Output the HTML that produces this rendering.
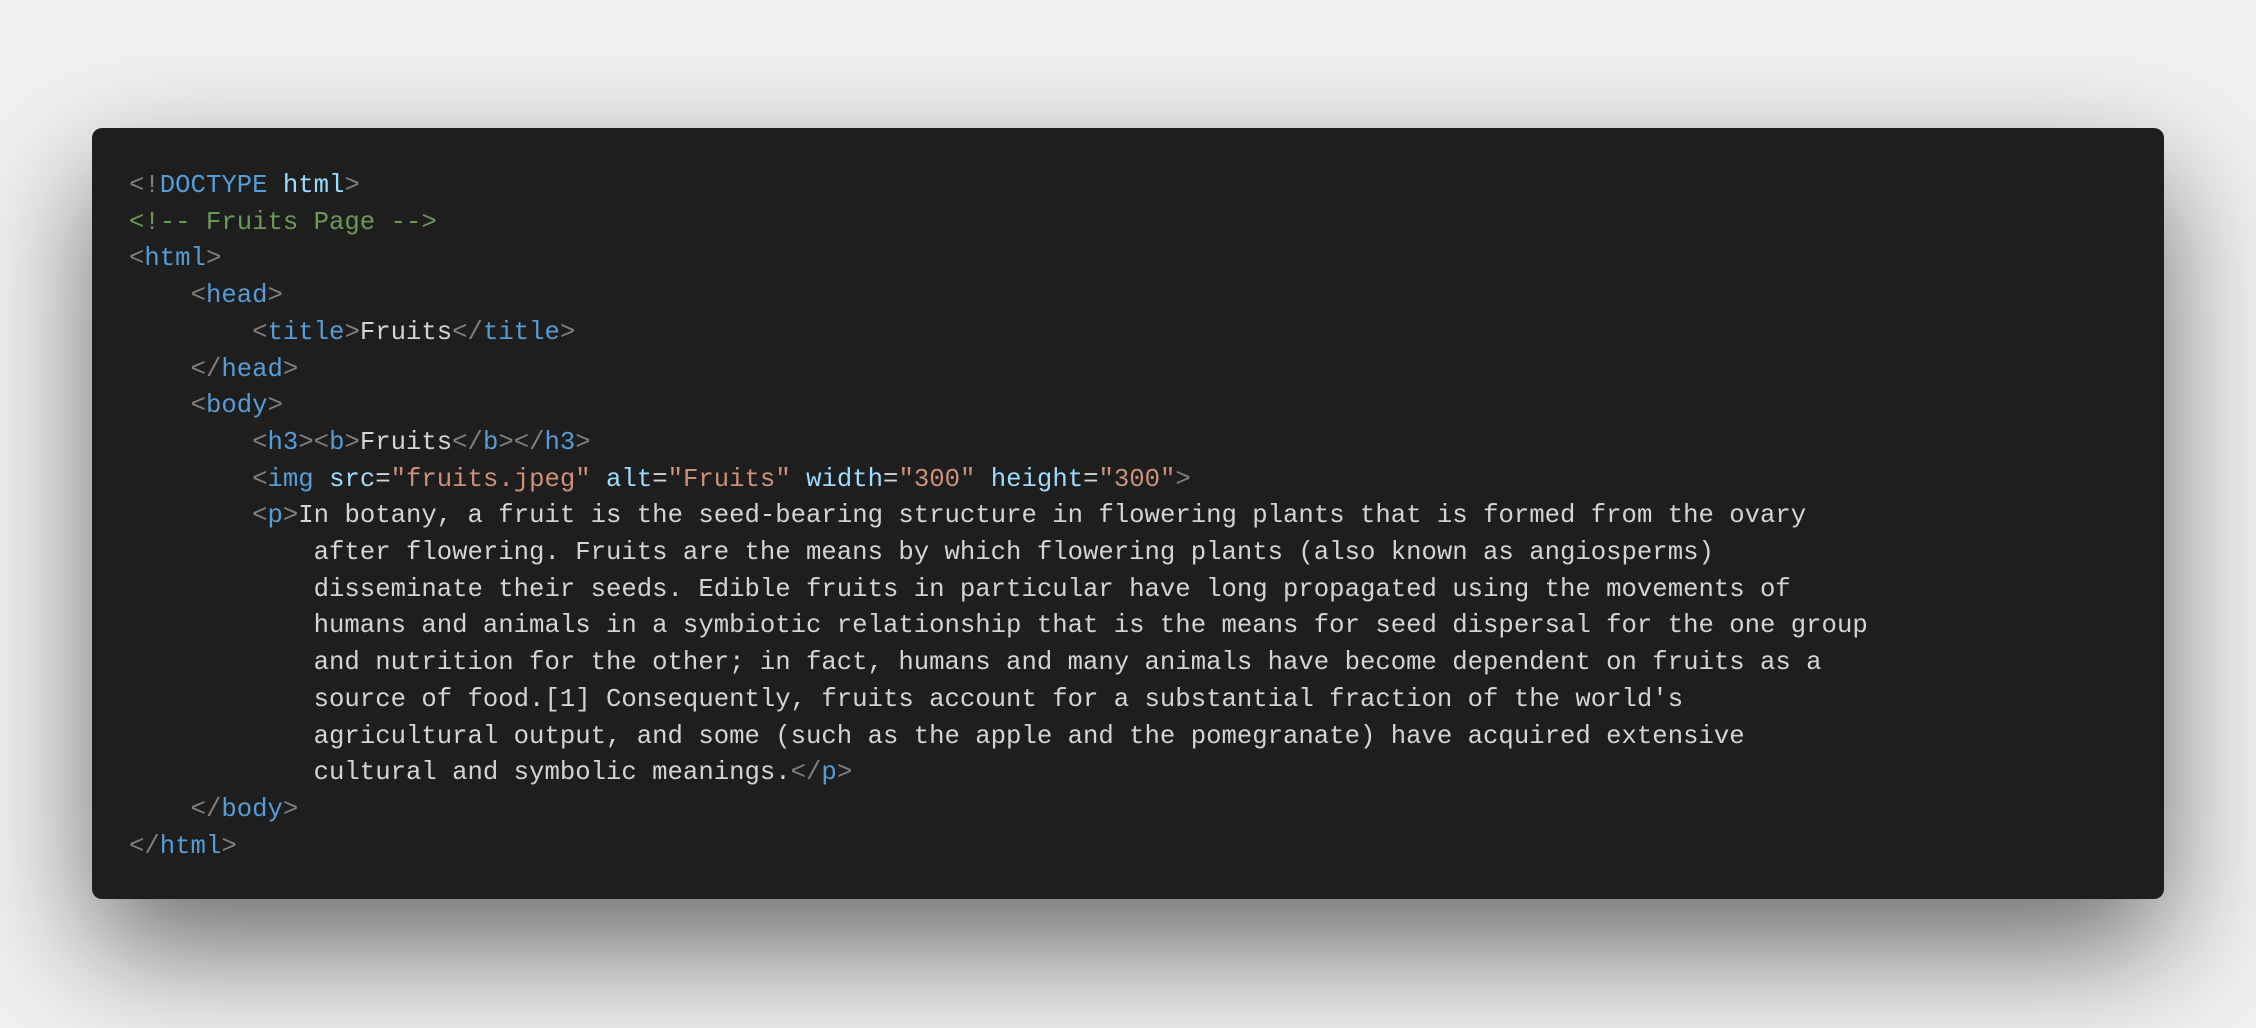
<!DOCTYPE html>
<html><head><meta charset="utf-8"><style>
html,body{margin:0;padding:0;}
body{width:2256px;height:1028px;background:#f0f0f0;position:relative;overflow:hidden;}
.box{position:absolute;left:92px;top:128px;width:2072px;height:771px;background:#1e1e1e;border-radius:10px;box-shadow:0 50px 120px rgba(0,0,0,0.55);}
pre{position:absolute;left:129px;top:168px;margin:0;font-family:"Liberation Mono",monospace;font-size:25.65px;line-height:36.7px;color:#d4d4d4;white-space:pre;}
.p{color:#808080}.t{color:#569cd6}.a{color:#9cdcfe}.s{color:#ce9178}.c{color:#6a9955}
</style></head><body>
<div class="box"></div>
<pre><span class="p">&lt;!</span><span class="t">DOCTYPE</span> <span class="a">html</span><span class="p">&gt;</span>
<span class="c">&lt;!-- Fruits Page --&gt;</span>
<span class="p">&lt;</span><span class="t">html</span><span class="p">&gt;</span>
    <span class="p">&lt;</span><span class="t">head</span><span class="p">&gt;</span>
        <span class="p">&lt;</span><span class="t">title</span><span class="p">&gt;</span>Fruits<span class="p">&lt;/</span><span class="t">title</span><span class="p">&gt;</span>
    <span class="p">&lt;/</span><span class="t">head</span><span class="p">&gt;</span>
    <span class="p">&lt;</span><span class="t">body</span><span class="p">&gt;</span>
        <span class="p">&lt;</span><span class="t">h3</span><span class="p">&gt;&lt;</span><span class="t">b</span><span class="p">&gt;</span>Fruits<span class="p">&lt;/</span><span class="t">b</span><span class="p">&gt;&lt;/</span><span class="t">h3</span><span class="p">&gt;</span>
        <span class="p">&lt;</span><span class="t">img</span> <span class="a">src</span>=<span class="s">"fruits.jpeg"</span> <span class="a">alt</span>=<span class="s">"Fruits"</span> <span class="a">width</span>=<span class="s">"300"</span> <span class="a">height</span>=<span class="s">"300"</span><span class="p">&gt;</span>
        <span class="p">&lt;</span><span class="t">p</span><span class="p">&gt;</span>In botany, a fruit is the seed-bearing structure in flowering plants that is formed from the ovary
            after flowering. Fruits are the means by which flowering plants (also known as angiosperms)
            disseminate their seeds. Edible fruits in particular have long propagated using the movements of
            humans and animals in a symbiotic relationship that is the means for seed dispersal for the one group
            and nutrition for the other; in fact, humans and many animals have become dependent on fruits as a
            source of food.[1] Consequently, fruits account for a substantial fraction of the world's
            agricultural output, and some (such as the apple and the pomegranate) have acquired extensive
            cultural and symbolic meanings.<span class="p">&lt;/</span><span class="t">p</span><span class="p">&gt;</span>
    <span class="p">&lt;/</span><span class="t">body</span><span class="p">&gt;</span>
<span class="p">&lt;/</span><span class="t">html</span><span class="p">&gt;</span></pre>
</body></html>
